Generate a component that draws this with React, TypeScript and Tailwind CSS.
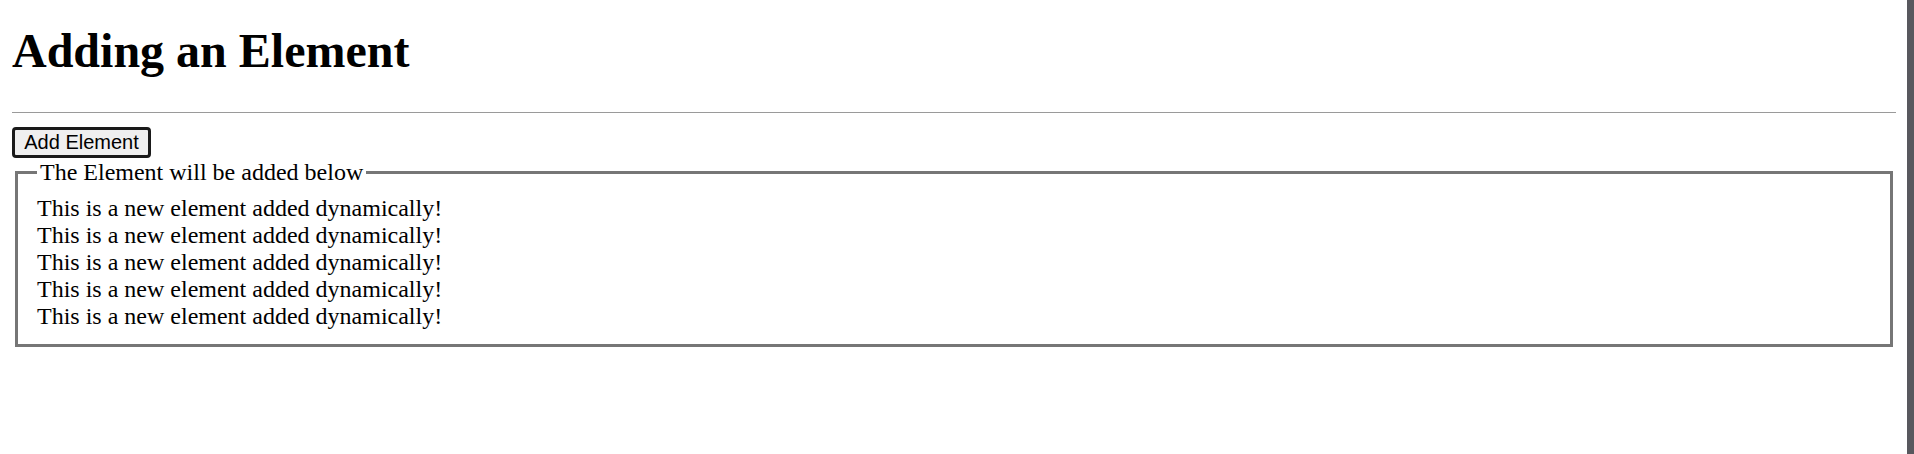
import React from "react";

export default function App() {
  const lines = Array.from({ length: 5 }, () => "This is a new element added dynamically!");
  return (
    <div className="flex min-h-[454px] bg-white text-black font-['Liberation_Serif','Times_New_Roman',serif]">
      <div className="flex-1 pl-[12px] pr-[11px]">
        <h1 className="mt-[23px] text-[48px] leading-[55px] font-bold">Adding an Element</h1>
        <hr className="mt-[34px] border-[#9a9a9a]" />
        <button className="mt-[14px] block w-[139px] h-[31px] rounded-[4px] border-[3px] border-[#1a1a1a] bg-[#efefef] text-[20px] leading-[23px] font-['Liberation_Sans',Arial,sans-serif] text-black">
          Add Element
        </button>
        <fieldset className="mt-[1px] mx-[3px] border-[3px] border-[#767676] pl-[19px] pr-[19px] pt-[9px] pb-[14px]">
          <legend className="px-[3px] text-[24px] leading-[26.67px]">The Element will be added below</legend>
          {lines.map((l, i) => (
            <div key={i} className="text-[24px] leading-[27px]">
              {l}
            </div>
          ))}
        </fieldset>
      </div>
      <div className="w-[7px] bg-[#58585e]" />
    </div>
  );
}
